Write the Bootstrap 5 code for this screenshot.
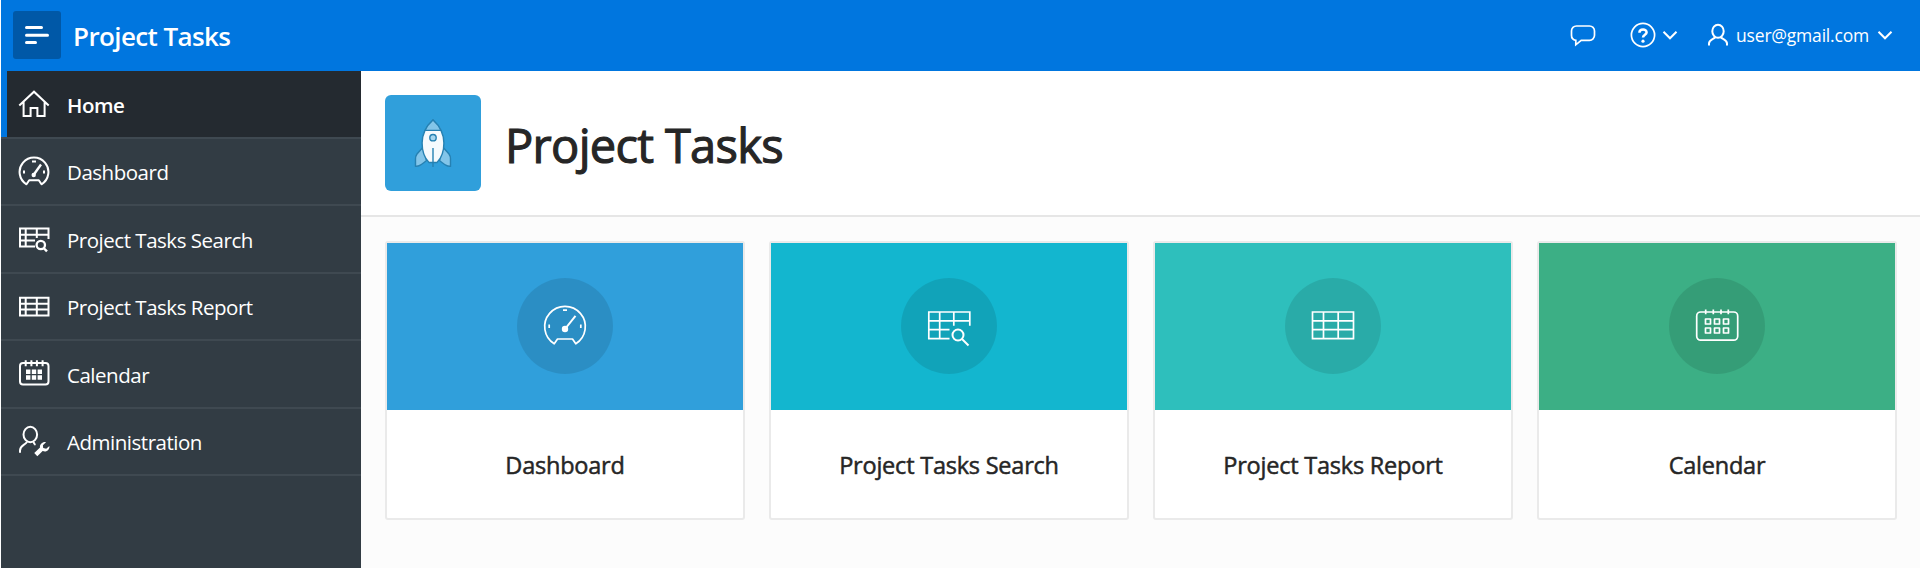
<!DOCTYPE html>
<html lang="en">
<head>
<meta charset="utf-8">
<title>Project Tasks</title>
<meta name="viewport" content="width=device-width, initial-scale=1">
<link href="https://cdn.jsdelivr.net/npm/bootstrap@5.3.0/dist/css/bootstrap.min.css" rel="stylesheet">
<style>
  body { font-family: "Open Sans", "Noto Sans", sans-serif; color: #262626; background: #fff; height: 568px; overflow: hidden; padding-left: 1px; }
  svg { display: block; flex: none; fill: none; stroke: currentColor; stroke-width: 2; }
  .app-bar { height: 71px; background: #0076df; color: #fff; padding: 0 27px 0 12px; }
  .menu-btn { width: 48px; height: 48px; background: #0058a7; border-radius: 3px; padding: 0; border: 0; color: #fff; margin-bottom: 1px; }
  .menu-btn svg { stroke-width: 3; stroke-linecap: round; }
  .app-title { font-size: 26px; font-weight: 600; line-height: 36px; margin-left: 12px; letter-spacing: -.6px; color: #fff; text-decoration: none; }
  .bar-tools { padding-bottom: 2px; }
  .bar-item { font-size: 17.5px; line-height: 24px; letter-spacing: -.2px; color: #fff; padding: 0; }
  .bar-user { margin-left: 30px; }
  .help-icon { margin: 0 6px 0 -14px; }
  .side { width: 360px; background: #323c44; flex: none; }
  .side .nav-link { height: 67.5px; border-bottom: 2px solid #3f4951; padding: 0 0 0 17px; color: #fff; font-size: 20.5px; letter-spacing: -.48px; gap: 17px; }
  .side .nav-link span { padding-top: 3px; }
  .side .nav-link.active { background: #242a30; box-shadow: inset 6px 0 #0076df; font-weight: 600; }
  .page-head { height: 146px; border-bottom: 2px solid #e6e6e6; padding: 0 24px; gap: 24px; }
  .hero-icon { width: 96px; height: 96px; border-radius: 6px; background: #309fdb; }
  .hero-icon svg { stroke: #2681b2; stroke-width: 1.4; }
  .page-head h1 { font-size: 47px; font-weight: 400; line-height: 60px; letter-spacing: -.7px; padding-top: 4px; -webkit-text-stroke: 1.1px; }
  .content-area { background: #fcfcfc; padding: 24px 23px 24px 24px; }
  .card-grid { gap: 24px; }
  .task-card { border: 2px solid #eaeaea; border-radius: 3px; height: 279px; flex: 1 1 0; color: #262626; }
  .task-top { height: 167px; color: #fff; padding-bottom: 2px; }
  .task-top svg { stroke-width: 1.7; }
  .disc { width: 96px; height: 96px; background: rgba(0,0,0,.1); }
  .task-card h2 { font-size: 23.5px; font-weight: 400; line-height: 32px; letter-spacing: -.22px; padding-top: 2px; -webkit-text-stroke: .5px; }
  .c1 { background: #309fdb; } .c2 { background: #13b6cf; } .c3 { background: #2ebfbc; } .c4 { background: #3caf85; }
</style>
</head>
<body class="d-flex flex-column">

<header class="app-bar d-flex align-items-center flex-shrink-0">
  <button class="menu-btn btn d-flex" type="button" aria-label="Menu">
    <svg width="48" height="48"><path d="M13.5 16.5H28.5M13.5 24.3H34.5M13.5 31.5H22.5"/></svg>
  </button>
  <a class="app-title" href="#">Project Tasks</a>
  <div class="bar-tools d-flex align-items-center ms-auto">
    <button class="bar-item btn border-0 me-5" type="button" aria-label="Feedback">
      <svg width="26" height="24"><path d="M6.5 3H19.5A5 5 0 0 1 24.5 8V12.3A5 5 0 0 1 19.5 17.3H11.2L5.8 21.8V17.3A5 5 0 0 1 1.5 12.3V8A5 5 0 0 1 6.5 3Z" stroke-width="1.7"/></svg>
    </button>
    <button class="bar-item btn border-0 d-flex align-items-center" type="button" aria-label="Help">
      <svg class="help-icon" width="26" height="26"><circle cx="13" cy="13" r="11.6" stroke-width="1.7"/><path d="M9.4 10.8C9.4 6.4 16.8 6.6 16.6 10.4C16.5 12.8 13 12.6 13 15.6" stroke-width="2.5"/><circle cx="13" cy="19.2" r="1.6" fill="currentColor" stroke="none"/></svg>
      <svg width="16" height="16"><path d="M1.5 4.8L8 11.3L14.5 4.8"/></svg>
    </button>
    <button class="bar-user bar-item btn border-0 d-flex align-items-center" type="button">
      <svg class="me-2" width="20" height="24"><ellipse cx="10" cy="8.3" rx="5.7" ry="6.5"/><path d="M1 22.5V20.5C1 16.5 5 16.5 7.2 14.2M19 22.5V20.5C19 16.5 15 16.5 12.8 14.2"/></svg>
      <span>user@gmail.com</span>
      <svg class="ms-2" width="16" height="16"><path d="M1.5 4.8L8 11.3L14.5 4.8"/></svg>
    </button>
  </div>
</header>

<div class="d-flex flex-grow-1">
  <nav class="side nav flex-column flex-nowrap">
    <a class="nav-link active d-flex align-items-center" href="#">
      <svg width="32" height="32"><path d="M1.3 17.6L16 3.7L30.7 17.6M5.6 14V28H12.6V20H19.4V28H26.6V14"/></svg><span>Home</span></a>
    <a class="nav-link d-flex align-items-center" href="#">
      <svg width="32" height="32"><path d="M8.5 29.3A14.4 14.4 0 1 1 23.5 29.3L20.8 25.3H11.2Z" stroke-linejoin="round"/><path d="M15.5 20L23 9.5" stroke-width="2.4"/><circle cx="15.7" cy="20" r="2.2" fill="currentColor" stroke="none"/><path d="M14 6.6H18M6 15.5V18.5M26 15.5V18.5"/></svg><span>Dashboard</span></a>
    <a class="nav-link d-flex align-items-center" href="#">
      <svg width="32" height="32"><path d="M17 23.5H2V5.5H30.5V16M2 11.7H30.5M2 17.6H17M7.7 5.5V23.5M18.8 5.5V15"/><circle cx="22.8" cy="22" r="4.2" stroke-width="2.3"/><path d="M25.6 25L29 28.4" stroke-width="2.4"/></svg><span>Project Tasks Search</span></a>
    <a class="nav-link d-flex align-items-center" href="#">
      <svg width="32" height="32"><path d="M2 7.8H30.5V25.5H2ZM2 13.7H30.5M2 19.6H30.5M7.7 7.8V25.5M18.8 7.8V25.5"/></svg><span>Project Tasks Report</span></a>
    <a class="nav-link d-flex align-items-center" href="#">
      <svg width="32" height="32"><rect x="2" y="5" width="28.5" height="21.5" rx="3"/><path d="M7.7 2.2V8.2M13.4 2.2V8.2M18.9 2.2V8.2M24.6 2.2V8.2"/><path d="M8 13.7H24M8 19.5H24" stroke-width="4.6" stroke-dasharray="4.4 1.4"/></svg><span>Calendar</span></a>
    <a class="nav-link d-flex align-items-center" href="#">
      <svg width="32" height="32"><ellipse cx="12.3" cy="9.5" rx="6.8" ry="7.7"/><path d="M2 27.8V25.5C2 20.5 6.5 20.5 9 17M15.6 16.8C15.8 18.2 16 19 17.5 19.8"/><path d="M17.8 29.6L24.6 23" stroke-width="4.4"/><path d="M28 17.2C25.6 16.6 22.1 18.6 21.9 21.8C21.800 25.200 25.500 27.200 28.300 26.200C30.300 25.400 31.800 23.200 31.400 20.900L28.200 23.800L25.200 23L24.900 20.200Z" fill="currentColor" stroke="none"/></svg><span>Administration</span></a>
  </nav>

  <main class="d-flex flex-column flex-grow-1">
    <div class="page-head d-flex align-items-center">
      <div class="hero-icon d-flex align-items-center justify-content-center">
        <svg width="48" height="48">
          <path d="M14 28.3L8 35Q6.5 37 6.5 40V47.2C10 47.5 12 46 17.5 41.5ZM34 28.3L40 35Q41.5 37 41.5 40V47.2C38 47.5 36 46 30.5 41.5Z" fill="#83c5e9"/>
          <path d="M24 1C16.5 8 13.1 15.5 13.1 24C13.1 33 16 39.5 20 43.5H28C32 39.5 34.9 33 34.9 24C34.9 15.5 31.5 8 24 1Z" fill="#f5fafd"/>
          <path d="M24 1C20.3 4.3 17.6 7.6 16 11.4H32C30.4 7.6 27.7 4.3 24 1Z" fill="#83c5e9"/>
          <circle cx="24" cy="18.7" r="3.2" fill="#a5d5ee"/><path d="M24 29V48"/>
        </svg>
      </div>
      <h1 class="mb-0">Project Tasks</h1>
    </div>

    <div class="content-area flex-grow-1">
      <div class="card-grid d-flex">
        <a class="task-card card text-decoration-none" href="#">
          <div class="task-top c1 d-flex align-items-center justify-content-center"><div class="disc rounded-circle d-flex align-items-center justify-content-center">
            <svg width="48" height="48"><path d="M13.2 41.8A20.3 20.3 0 1 1 34.8 41.8L31.5 37H16.5Z" stroke-linejoin="round"/><path d="M24 27L34.5 13.8" stroke-width="2"/><circle cx="24" cy="27" r="3.2" fill="currentColor" stroke="none"/><path d="M22 8.2H26M8.2 22.5V26M39.8 22.5V26"/></svg>
          </div></div>
          <div class="card-body d-flex align-items-center justify-content-center"><h2 class="mb-0">Dashboard</h2></div>
        </a>
        <a class="task-card card text-decoration-none" href="#">
          <div class="task-top c2 d-flex align-items-center justify-content-center"><div class="disc rounded-circle d-flex align-items-center justify-content-center">
            <svg width="48" height="48"><path d="M24.5 36.7H3.8V10H44.8V23.7M3.8 18.8H44.8M3.8 27.7H24.5M14.7 10V36.7M28.8 10V23.7"/><circle cx="33" cy="33" r="5.5" stroke-width="2"/><path d="M37 37L43.5 43.5" stroke-width="2"/></svg>
          </div></div>
          <div class="card-body d-flex align-items-center justify-content-center"><h2 class="mb-0">Project Tasks Search</h2></div>
        </a>
        <a class="task-card card text-decoration-none" href="#">
          <div class="task-top c3 d-flex align-items-center justify-content-center"><div class="disc rounded-circle d-flex align-items-center justify-content-center">
            <svg width="48" height="48"><path d="M3.5 10H44.5V36.7H3.5ZM3.5 18.8H44.5M3.5 27.7H44.5M14.5 10V36.7M29.2 10V36.7"/></svg>
          </div></div>
          <div class="card-body d-flex align-items-center justify-content-center"><h2 class="mb-0">Project Tasks Report</h2></div>
        </a>
        <a class="task-card card text-decoration-none" href="#">
          <div class="task-top c4 d-flex align-items-center justify-content-center"><div class="disc rounded-circle d-flex align-items-center justify-content-center">
            <svg width="48" height="48"><rect x="3.7" y="10" width="41" height="28.2" rx="4"/><path d="M12.7 7.5V12.3M20.3 7.5V12.3M28 7.5V12.3M35.3 7.5V12.3"/><path d="M12.5 17H17.5V22H12.5ZM21.5 17H26.5V22H21.5ZM30.5 17H35.5V22H30.5ZM12.5 26H17.5V31H12.5ZM21.5 26H26.5V31H21.5ZM30.5 26H35.5V31H30.5Z" stroke-linejoin="round"/></svg>
          </div></div>
          <div class="card-body d-flex align-items-center justify-content-center"><h2 class="mb-0">Calendar</h2></div>
        </a>
      </div>
    </div>
  </main>
</div>
<script src="https://cdn.jsdelivr.net/npm/bootstrap@5.3.0/dist/js/bootstrap.bundle.min.js"></script>
</body>
</html>
